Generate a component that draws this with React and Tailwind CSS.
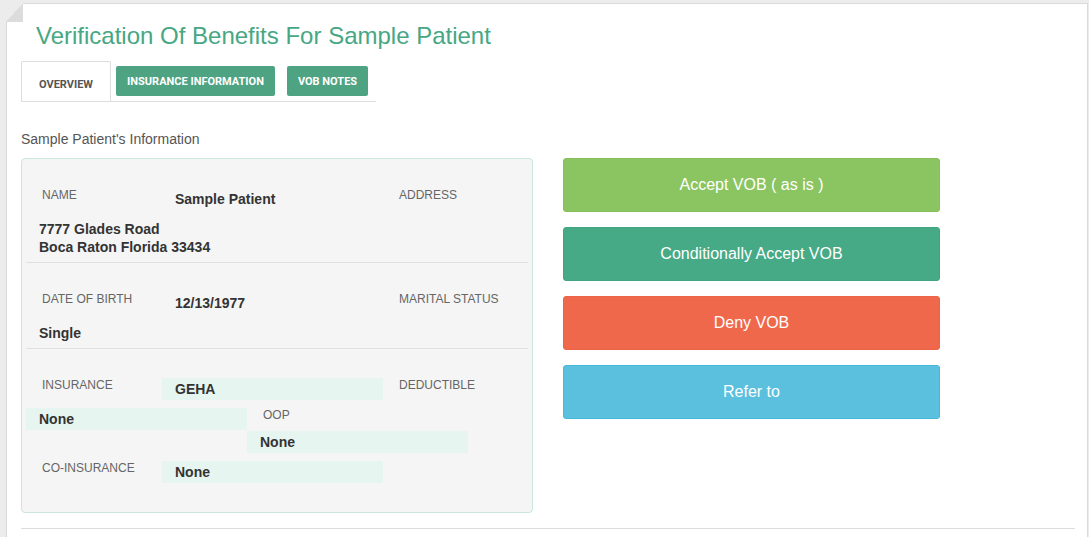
import React from "react";

const arial = { fontFamily: '"Liberation Sans", Arial, sans-serif' };

function Label({ children, className = "" }) {
  return (
    <div className={"w-[136px] h-[22px] pl-[16px] pt-[1px] text-[12px] leading-[12px] text-[#666] uppercase " + className}>
      {children}
    </div>
  );
}

function Value({ children, hl = false, className = "" }) {
  return (
    <div
      className={
        "w-[221px] min-h-[22px] pl-[13px] py-[2px] text-[14px] leading-[18px] font-bold text-[#333] " +
        (hl ? "bg-[#e7f5f1] " : "") +
        className
      }
    >
      {children}
    </div>
  );
}

export default function App() {
  return (
    <div className="h-[537px] overflow-hidden bg-[#ececec] pt-[3px]" style={arial}>
      <div className="relative ml-[6px] w-[1082px] h-[560px] bg-white border border-[#dadada] pl-[14px]">
        <div className="absolute -top-px -left-px w-[17px] h-[19px] bg-linear-to-br from-[#ececec] from-50% to-[#dcdcdc] to-50%" />
        <h1 className="pt-[16px] pl-[15px] text-[24px] leading-[32px] text-[#47a783] font-normal">
          Verification Of Benefits For Sample Patient
        </h1>

        <div
          className="mt-[9px] flex items-start w-[355px] border-b border-[#dddddd] h-[41px]"
          style={{ fontFamily: "Roboto, sans-serif" }}
        >
          <div className="w-[90px] h-[40px] border-t border-l border-r border-[#dddddd] rounded-t-[2px] flex items-center justify-center pt-[7px] text-[11px] font-bold text-[#555]">
            OVERVIEW
          </div>
          <div className="ml-[5px] mt-[5px] w-[159px] h-[30px] rounded-[2px] bg-[#4ea382] flex items-center justify-center pt-[3px] text-[11px] font-bold text-white">
            INSURANCE INFORMATION
          </div>
          <div className="ml-[12px] mt-[5px] w-[81px] h-[30px] rounded-[2px] bg-[#4ea382] flex items-center justify-center pt-[3px] text-[11px] font-bold text-white">
            VOB NOTES
          </div>
        </div>

        <div className="mt-[27px] text-[14px] leading-[20px] text-[#555]">Sample Patient's Information</div>

        <div className="mt-[9px] flex items-start">
          <div className="w-[512px] border border-[#cbe6dc] rounded-[4px] bg-[#f5f5f5] px-[4px]">
            <div className="border-b border-[#e0e0e0] pt-[29px] pb-[4px] flex flex-wrap gap-y-[8px]">
              <Label>Name</Label>
              <Value>Sample Patient</Value>
              <Label>Address</Label>
              <Value className="w-[260px]">
                7777 Glades Road
                <br />
                Boca Raton Florida 33434
              </Value>
            </div>
            <div className="border-b border-[#e0e0e0] pt-[29px] pb-[4px] flex flex-wrap gap-y-[8px]">
              <Label>Date of Birth</Label>
              <Value>12/13/1977</Value>
              <Label>Marital Status</Label>
              <Value>Single</Value>
            </div>
            <div className="pt-[29px] pb-[29px] flex flex-col">
              <div className="flex">
                <Label>Insurance</Label>
                <Value hl>GEHA</Value>
                <Label>Deductible</Label>
              </div>
              <div className="flex mt-[8px]">
                <Value hl>None</Value>
                <Label>OOP</Label>
              </div>
              <div className="flex mt-[1px] pl-[221px]">
                <Value hl>None</Value>
              </div>
              <div className="flex mt-[8px]">
                <Label>Co-Insurance</Label>
                <Value hl>None</Value>
              </div>
            </div>
          </div>

          <div className="ml-[30px] w-[377px] flex flex-col gap-[15px] text-[16px] text-white">
            <button className="h-[54px] rounded-[3px] bg-[#8bc561] border border-[#86c05c]">Accept VOB ( as is )</button>
            <button className="h-[54px] rounded-[3px] bg-[#46aa87] border border-[#42a582]">Conditionally Accept VOB</button>
            <button className="h-[54px] rounded-[3px] bg-[#ef684b] border border-[#eb6447]">Deny VOB</button>
            <button className="h-[54px] rounded-[3px] bg-[#5bc0de] border border-[#46b8da]">Refer to</button>
          </div>
        </div>

        <div className="mt-[15px] w-[1054px] border-t border-[#dddddd]" />
      </div>
    </div>
  );
}
